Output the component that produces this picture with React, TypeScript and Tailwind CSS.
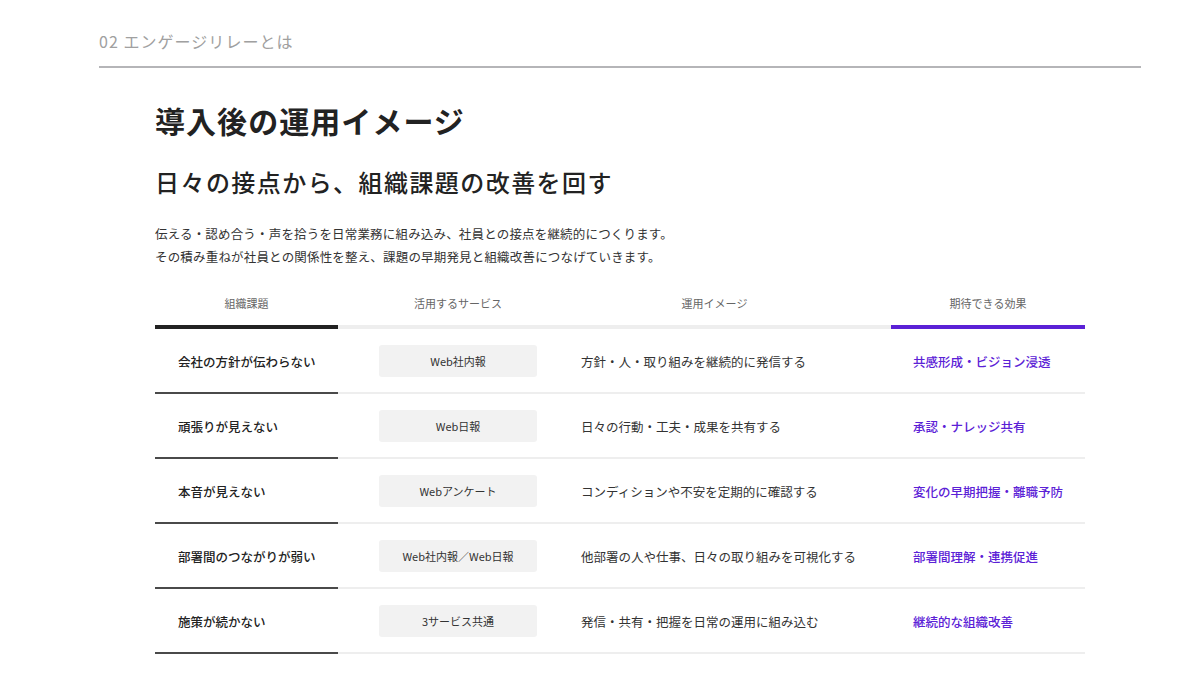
import React from 'react';

const font = { fontFamily: '"Noto Sans CJK JP", "Noto Sans", sans-serif' };

const rows = [
  { issue: '会社の方針が伝わらない', service: 'Web社内報', usage: '方針・人・取り組みを継続的に発信する', effect: '共感形成・ビジョン浸透' },
  { issue: '頑張りが見えない', service: 'Web日報', usage: '日々の行動・工夫・成果を共有する', effect: '承認・ナレッジ共有' },
  { issue: '本音が見えない', service: 'Webアンケート', usage: 'コンディションや不安を定期的に確認する', effect: '変化の早期把握・離職予防' },
  { issue: '部署間のつながりが弱い', service: 'Web社内報／Web日報', usage: '他部署の人や仕事、日々の取り組みを可視化する', effect: '部署間理解・連携促進' },
  { issue: '施策が続かない', service: '3サービス共通', usage: '発信・共有・把握を日常の運用に組み込む', effect: '継続的な組織改善' },
];

const App: React.FC = () => {
  return (
    <div className="w-[1200px] h-[674px] bg-white overflow-hidden" style={font}>
      <div className="ml-[99px] w-[1042px] pt-[29px]">
        {/* section label */}
        <div className="text-[16px] leading-[24px] tracking-[0.065em] text-[#a0a0a0]">02 エンゲージリレーとは</div>
        <div className="mt-[13px] h-[2px] bg-[#b5b5b8]" />

        <div className="px-[56px]">
          <h1 className="mt-[34px] text-[30px] leading-[36px] font-bold tracking-[0.035em] text-[#222]">導入後の運用イメージ</h1>
          <h2 className="mt-[28px] text-[24px] leading-[32px] font-medium tracking-[0.06em] text-[#222]">
            日々の接点から、組織課題の改善を回す
          </h2>
          <p className="mt-[24px] text-[12.5px] leading-[23px] tracking-[0.014em] text-[#333]">
            伝える・認め合う・声を拾うを日常業務に組み込み、社員との接点を継続的につくります。
            <br />
            その積み重ねが社員との関係性を整え、課題の早期発見と組織改善につなげていきます。
          </p>

          {/* table */}
          <div className="mt-[27px]">
            <div className="grid grid-cols-[183px_240px_313px_194px] text-[11px] leading-[16px] text-[#666]">
              <div className="pb-[14px] text-center border-b-4 border-[#222]">組織課題</div>
              <div className="pb-[14px] text-center border-b-4 border-[#eeeeee]">活用するサービス</div>
              <div className="pb-[14px] pr-[40px] text-center border-b-4 border-[#eeeeee]">運用イメージ</div>
              <div className="pb-[14px] text-center border-b-4 border-[#5b21d6]">期待できる効果</div>
            </div>
            {rows.map((r) => (
              <div key={r.issue} className="grid grid-cols-[183px_240px_313px_194px] h-[65px] text-[12.5px]">
                <div className="flex items-center pt-[3px] pl-[23px] border-b-2 border-[#4a4a4a] font-medium text-[#222]">{r.issue}</div>
                <div className="flex items-center justify-center border-b-2 border-[#eeeeee]">
                  <div className="w-[158px] h-[32px] pt-[2px] rounded-[3px] bg-[#f2f2f2] flex items-center justify-center text-[11px] text-[#333]">
                    {r.service}
                  </div>
                </div>
                <div className="flex items-center pt-[3px] pl-[3px] border-b-2 border-[#eeeeee] text-[#333]">{r.usage}</div>
                <div className="flex items-center pt-[3px] pl-[22px] border-b-2 border-[#eeeeee] font-medium text-[#5b21d6]">{r.effect}</div>
              </div>
            ))}
          </div>
        </div>
      </div>
    </div>
  );
};

export default App;
